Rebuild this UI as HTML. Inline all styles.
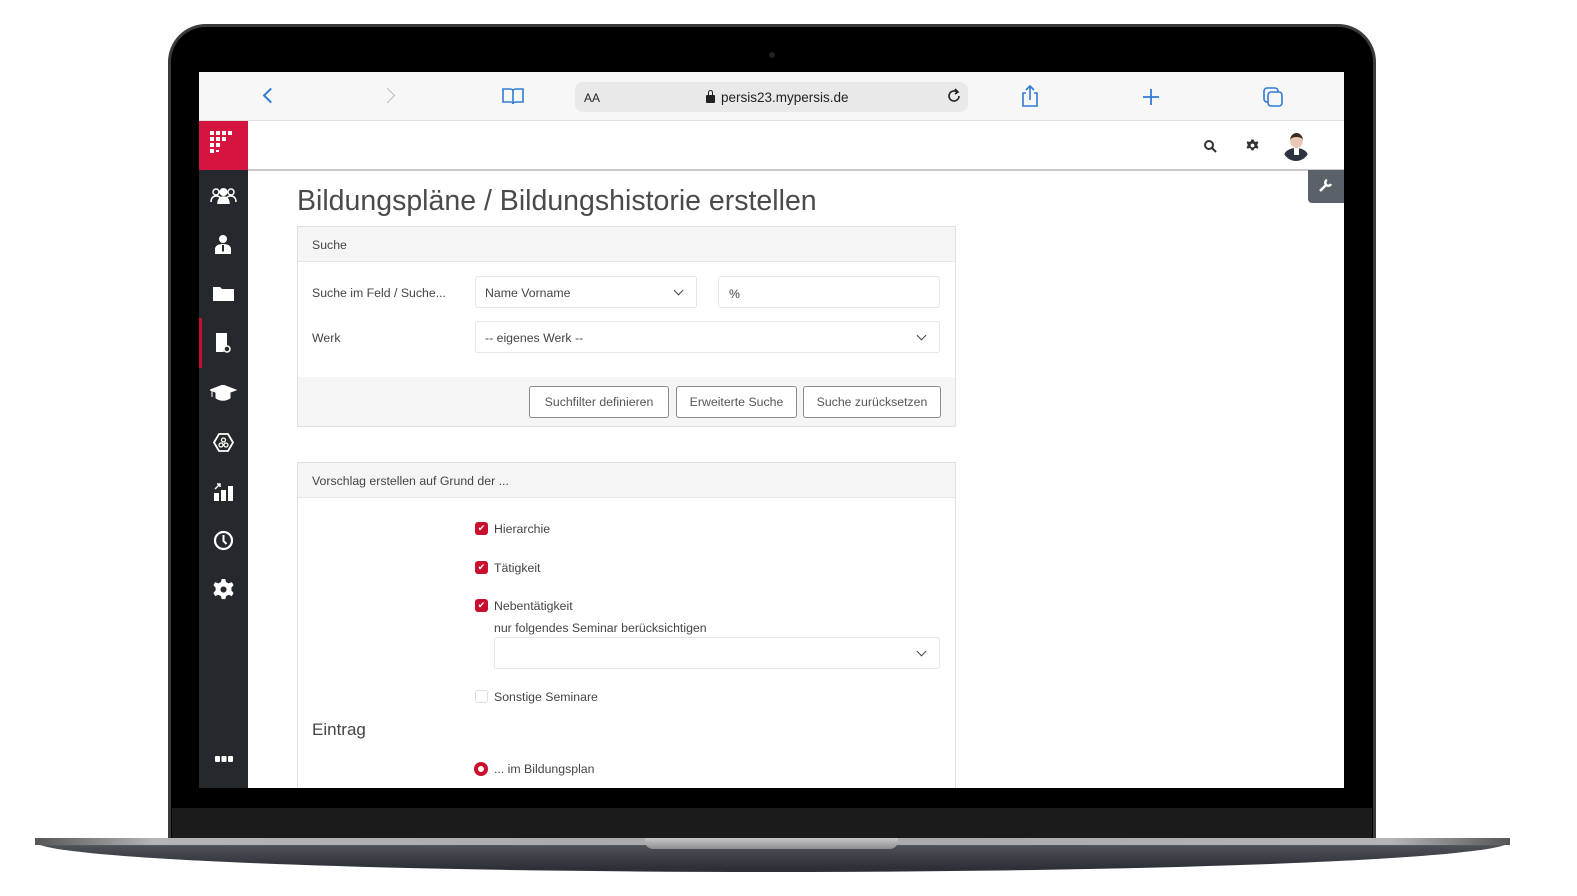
<!DOCTYPE html>
<html><head><meta charset="utf-8"><style>
*{box-sizing:border-box;margin:0;padding:0}
body{width:1577px;height:896px;background:#fff;position:relative;overflow:hidden;font-family:"Liberation Sans",sans-serif;color:#444}
.a{position:absolute}
.t{position:absolute;font-size:12.3px;color:#444;white-space:nowrap}
.inp{position:absolute;border:1px solid #e6e6e6;background:#fff;border-radius:3px}
.btn{position:absolute;border:1px solid #8a8a8a;border-radius:3px;background:#fff;font-size:12.3px;color:#555;text-align:center;line-height:30px;height:32px}
.chk{position:absolute;width:13px;height:13px;border-radius:3px;background:#c8102e;color:#fff;font-size:9px;line-height:13px;text-align:center}
.chev{position:absolute;width:7px;height:7px;border-right:1.5px solid #444;border-bottom:1.5px solid #444;transform:rotate(45deg)}
.ic{position:absolute;left:0;width:49px;text-align:center}
</style></head><body>
<div class="a" style="left:168px;top:24px;width:1208px;height:818px;background:#000;border-radius:38px 38px 0 0;border:3px solid #3a3a3c;border-bottom:none"></div>
<div class="a" style="left:172px;top:808px;width:1200px;height:32px;background:#1b1b1b"></div>
<div class="a" style="left:769px;top:52px;width:6px;height:6px;border-radius:50%;background:#222"></div>
<div class="a" style="left:35px;top:838px;width:1475px;height:34px;background:linear-gradient(#9a9a9e 0,#8a8a8f 4px,#4e5058 8px,#2e3038 30px);border-radius:0 0 50% 50%/0 0 90% 90%"></div>
<div class="a" style="left:35px;top:838px;width:1475px;height:7px;background:linear-gradient(90deg,#555 0,#b5b5b8 8%,#a8a8ac 50%,#b5b5b8 92%,#555 100%)"></div>
<div class="a" style="left:645px;top:838px;width:253px;height:11px;background:linear-gradient(#c8c8cb,#8e8e92);border-radius:0 0 8px 8px"></div>
<div class="a" style="left:199px;top:72px;width:1145px;height:716px;background:#fff;overflow:hidden">
 <div class="a" style="left:0;top:0;width:1145px;height:49px;background:#f7f7f7;border-bottom:1px solid #e2e2e2"></div>
 <div class="a" style="left:66px;top:18px;width:11px;height:11px;border-left:2px solid #2f7bd6;border-bottom:2px solid #2f7bd6;transform:rotate(45deg)"></div>
 <div class="a" style="left:183px;top:18px;width:11px;height:11px;border-right:1.5px solid #bbb;border-top:1.5px solid #bbb;transform:rotate(45deg)"></div>
 <svg class="a" style="left:302px;top:14px" width="24" height="20" viewBox="0 0 24 20"><path d="M2 3h7c2 0 3 1 3 2v13c0-1-1-2-3-2H2z M22 3h-7c-2 0-3 1-3 2v13c0-1 1-2 3-2h7z" fill="none" stroke="#2f7bd6" stroke-width="1.6"/></svg>
 <div class="a" style="left:376px;top:10px;width:393px;height:30px;background:#e9e9ea;border-radius:8px"></div>
 <div class="t" style="left:385px;top:19px;font-size:12px;color:#222">AA</div>
 <div class="a" style="left:507px;top:23px;width:9px;height:8px;background:#222;border-radius:1px"></div>
 <div class="a" style="left:509px;top:18px;width:5px;height:6px;border:1.5px solid #222;border-bottom:none;border-radius:3px 3px 0 0"></div>
 <div class="t" style="left:522px;top:18px;font-size:13.5px;color:#222">persis23.mypersis.de</div>
 <svg class="a" style="left:746px;top:15px" width="18" height="18" viewBox="0 0 18 18"><path d="M14 9a5 5 0 1 1-2-4" fill="none" stroke="#222" stroke-width="1.6"/><path d="M10 2l3 3-3 2" fill="none" stroke="#222" stroke-width="1.6"/></svg>
 <svg class="a" style="left:820px;top:12px" width="22" height="24" viewBox="0 0 22 24"><path d="M7 9H4v13h14V9h-3 M11 16V2 M7 6l4-4 4 4" fill="none" stroke="#2f7bd6" stroke-width="1.6"/></svg>
 <svg class="a" style="left:942px;top:15px" width="20" height="20" viewBox="0 0 20 20"><path d="M10 2v16M2 10h16" stroke="#2f7bd6" stroke-width="1.8"/></svg>
 <svg class="a" style="left:1063px;top:14px" width="22" height="22" viewBox="0 0 22 22"><rect x="2" y="2" width="14" height="14" rx="3" fill="none" stroke="#2f7bd6" stroke-width="1.6"/><rect x="6" y="6" width="14" height="14" rx="3" fill="#f7f7f7" stroke="#2f7bd6" stroke-width="1.6"/></svg>
 <div class="a" style="left:0;top:49px;width:49px;height:49px;background:#d5153f"></div>
 <svg class="a" style="left:11px;top:59px" width="26" height="26" viewBox="0 0 26 26" fill="#fff"><rect x="0" y="0" width="4" height="4"/><rect x="6" y="0" width="4" height="4"/><rect x="12" y="0" width="4" height="4"/><rect x="18" y="0" width="4" height="4"/><rect x="0" y="6" width="4" height="4"/><rect x="6" y="6" width="4" height="4"/><rect x="12" y="6" width="4" height="4"/><rect x="0" y="12" width="4" height="4"/><rect x="6" y="12" width="4" height="4"/><rect x="0" y="18" width="4" height="4"/><rect x="6" y="19" width="3" height="2"/></svg>
 <div class="a" style="left:49px;top:97px;width:1096px;height:2px;background:#c9c9c9"></div>
 <svg class="a" style="left:1004px;top:67px" width="14" height="14" viewBox="0 0 14 14"><circle cx="6" cy="6" r="4" fill="none" stroke="#333" stroke-width="2"/><path d="M9 9l4 4" stroke="#333" stroke-width="2"/></svg>
 <svg class="a" style="left:1047px;top:67px" width="13" height="13" viewBox="0 0 24 24" fill="#333"><path d="M10 1h4l1 3 3 1.5 3-1.5 2 3-2 2.5v3l2 2.5-2 3-3-1.5-3 1.5-1 3h-4l-1-3-3-1.5-3 1.5-2-3 2-2.5v-3l-2-2.5 2-3 3 1.5 3-1.5z"/><circle cx="12" cy="12" r="3.5" fill="#fff"/></svg>
 <div class="a" style="left:1083px;top:59px;width:28px;height:30px;border-radius:50%;overflow:hidden;background:#fff">
  <div class="a" style="left:8px;top:2px;width:13px;height:15px;border-radius:50%;background:#e9c8b6;border-top:4px solid #3a2a22"></div>
  <div class="a" style="left:2px;top:17px;width:24px;height:16px;border-radius:50% 50% 0 0;background:#2d3240"></div>
  <div class="a" style="left:12px;top:17px;width:5px;height:7px;background:#fff"></div>
 </div>
 <div class="a" style="left:0;top:98px;width:49px;height:618px;background:#25282c"></div>
 <div class="a" style="left:0;top:246px;width:3px;height:50px;background:#c8102e"></div>
 <svg class="a" style="left:11px;top:115px" width="27" height="17" viewBox="0 0 27 17" fill="none" stroke="#fff" stroke-width="1.5"><circle cx="6" cy="5" r="3"/><circle cx="21" cy="5" r="3"/><path d="M1 15c0-4 2-6 5-6s4 1 4 2 M26 15c0-4-2-6-5-6s-4 1-4 2"/><circle cx="13.5" cy="5" r="3.3" fill="#fff"/><path d="M8 17c0-5 2.5-7 5.5-7s5.5 2 5.5 7z" fill="#fff"/></svg>
 <svg class="a" style="left:14px;top:162px" width="20" height="20" viewBox="0 0 20 20" fill="#fff"><circle cx="10" cy="5" r="4"/><path d="M2 20v-5c0-3 3-5 8-5s8 2 8 5v5z"/><path d="M9 11h2l0 6-1 1-1-1z" fill="#25282c"/></svg>
 <svg class="a" style="left:14px;top:213px" width="21" height="16" viewBox="0 0 21 16" fill="#fff"><path d="M0 2h7l2 2h12v12H0z"/></svg>
 <svg class="a" style="left:17px;top:261px" width="16" height="22" viewBox="0 0 16 22" fill="#fff"><path d="M0 0h11v13a4 4 0 0 0-3 6H0z"/><circle cx="11" cy="16" r="3" fill="none" stroke="#fff" stroke-width="1.5"/></svg>
 <svg class="a" style="left:11px;top:313px" width="27" height="16" viewBox="0 0 27 16" fill="#fff"><path d="M13 0l13 5-13 5L0 5z M6 8v5c4 3 10 3 14 0V8l-7 3z M2 6v6" stroke="#fff"/></svg>
 <svg class="a" style="left:14px;top:360px" width="21" height="21" viewBox="0 0 21 21"><path d="M6 2h9l5 8.5-5 8.5H6L1 10.5z" fill="none" stroke="#fff" stroke-width="1.8"/><circle cx="10.5" cy="8" r="2" fill="none" stroke="#fff" stroke-width="1.3"/><circle cx="8" cy="13" r="2" fill="none" stroke="#fff" stroke-width="1.3"/><circle cx="13" cy="13" r="2" fill="none" stroke="#fff" stroke-width="1.3"/></svg>
 <svg class="a" style="left:15px;top:409px" width="19" height="20" viewBox="0 0 19 20" fill="#fff"><rect x="0" y="12" width="5" height="8"/><rect x="7" y="9" width="5" height="11"/><rect x="14" y="5" width="5" height="15"/><path d="M1 8l5-5M3 3h3v3" stroke="#fff" stroke-width="1.5" fill="none"/></svg>
 <svg class="a" style="left:14px;top:458px" width="21" height="21" viewBox="0 0 21 21"><circle cx="10.5" cy="10.5" r="8.5" fill="none" stroke="#fff" stroke-width="2.2"/><path d="M10.5 5v6l3 3" fill="none" stroke="#fff" stroke-width="2"/></svg>
 <svg class="a" style="left:14px;top:507px" width="21" height="21" viewBox="0 0 24 24" fill="#fff"><path d="M10 0h4l1 3.5 3 1.5 3.5-1.5 2 3.5-2.5 3v3l2.5 3-2 3.5-3.5-1.5-3 1.5-1 3.5h-4l-1-3.5-3-1.5-3.5 1.5-2-3.5 2.5-3v-3L.5 7l2-3.5L6 5l3-1.5z"/><circle cx="12" cy="12" r="3.5" fill="#25282c"/></svg>
 <svg class="a" style="left:16px;top:684px" width="18" height="6" viewBox="0 0 18 6" fill="#fff"><rect x="0" y="0" width="5" height="6" rx="1"/><rect x="6.5" y="0" width="5" height="6" rx="1"/><rect x="13" y="0" width="5" height="6" rx="1"/></svg>
 <div class="a" style="left:1109px;top:98px;width:36px;height:33px;background:#5a6168;border-radius:0 0 0 4px"></div>
 <svg class="a" style="left:1120px;top:106px" width="14" height="14" viewBox="0 0 14 14"><path d="M1 13l7-7M8 2a3 3 0 1 0 4 4" stroke="#fff" stroke-width="2.5" fill="none"/></svg>
 <div class="t" style="left:98px;top:113px;font-size:28.5px;color:#4a4a4a">Bildungspläne / Bildungshistorie erstellen</div>
 <div class="a" style="left:98px;top:154px;width:659px;height:201px;border:1px solid #e0e0e0;background:#fff"></div>
 <div class="a" style="left:99px;top:155px;width:657px;height:35px;background:#f5f5f5;border-bottom:1px solid #e6e6e6"></div>
 <div class="t" style="left:113px;top:166px">Suche</div>
 <div class="t" style="left:113px;top:214px">Suche im Feld / Suche...</div>
 <div class="inp" style="left:276px;top:204px;width:222px;height:32px"></div>
 <div class="t" style="left:286px;top:214px">Name Vorname</div>
 <div class="chev" style="left:476px;top:215px"></div>
 <div class="inp" style="left:519px;top:204px;width:222px;height:32px"></div>
 <div class="t" style="left:530px;top:215px">%</div>
 <div class="t" style="left:113px;top:259px">Werk</div>
 <div class="inp" style="left:276px;top:249px;width:465px;height:32px"></div>
 <div class="t" style="left:286px;top:259px">-- eigenes Werk --</div>
 <div class="chev" style="left:719px;top:260px"></div>
 <div class="a" style="left:99px;top:305px;width:657px;height:49px;background:#f5f5f5"></div>
 <div class="btn" style="left:330px;top:314px;width:140px">Suchfilter definieren</div>
 <div class="btn" style="left:477px;top:314px;width:121px">Erweiterte Suche</div>
 <div class="btn" style="left:604px;top:314px;width:138px">Suche zurücksetzen</div>
 <div class="a" style="left:98px;top:390px;width:659px;height:340px;border:1px solid #e0e0e0;background:#fff"></div>
 <div class="a" style="left:99px;top:391px;width:657px;height:35px;background:#f5f5f5;border-bottom:1px solid #e6e6e6"></div>
 <div class="t" style="left:113px;top:402px">Vorschlag erstellen auf Grund der ...</div>
 <div class="chk" style="left:276px;top:450px">✔</div><div class="t" style="left:295px;top:450px">Hierarchie</div>
 <div class="chk" style="left:276px;top:489px">✔</div><div class="t" style="left:295px;top:489px">Tätigkeit</div>
 <div class="chk" style="left:276px;top:527px">✔</div><div class="t" style="left:295px;top:527px">Nebentätigkeit</div>
 <div class="t" style="left:295px;top:549px">nur folgendes Seminar berücksichtigen</div>
 <div class="inp" style="left:295px;top:565px;width:446px;height:32px"></div>
 <div class="chev" style="left:719px;top:576px"></div>
 <div class="a" style="left:276px;top:618px;width:13px;height:13px;border:1px solid #ddd;border-radius:3px"></div>
 <div class="t" style="left:295px;top:618px">Sonstige Seminare</div>
 <div class="t" style="left:113px;top:648px;font-size:17px;color:#444">Eintrag</div>
 <div class="a" style="left:275px;top:690px;width:14px;height:14px;border-radius:50%;border:4px solid #c8102e;background:#fff"></div>
 <div class="t" style="left:295px;top:690px">... im Bildungsplan</div>
</div>
</body></html>
